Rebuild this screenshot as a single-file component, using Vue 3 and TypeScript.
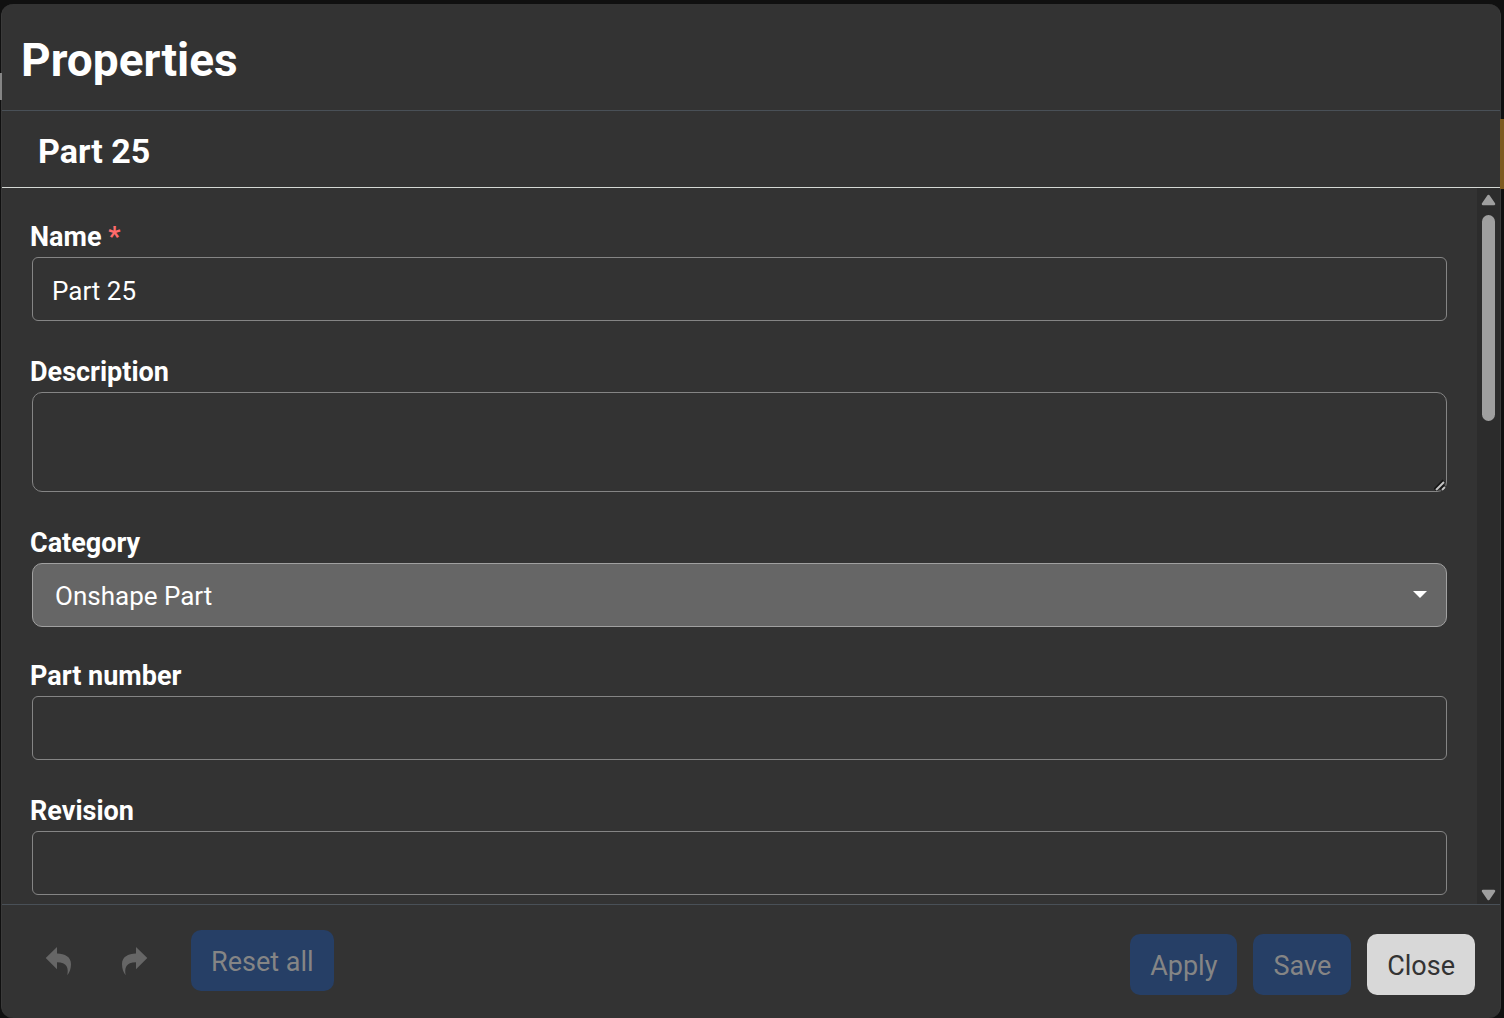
<script setup lang="ts">
import { ref } from 'vue'

const name = ref('Part 25')
const description = ref('')
const category = ref('Onshape Part')
const partNumber = ref('')
const revision = ref('')
</script>

<template>
  <div class="backdrop">
    <section class="dialog" role="dialog" aria-labelledby="dialog-title">
      <header class="dialog-header">
        <h1 id="dialog-title">Properties</h1>
      </header>
      <h2 class="part-title">Part 25</h2>

      <div class="body">
        <form id="properties" class="fields" @submit.prevent>
          <div class="field">
            <label for="name">Name <span class="required">*</span></label>
            <input id="name" v-model="name" type="text" required />
          </div>
          <div class="field">
            <label for="description">Description</label>
            <div class="control">
              <textarea id="description" v-model="description"></textarea>
              <svg class="grip" viewBox="0 0 12 12" aria-hidden="true">
                <path d="M1 11 L10 2 M7 11 L11 7" stroke="#151515" stroke-width="4" />
                <path d="M2 11 L10 3 M8 11 L11 8" stroke="#c4c4c4" stroke-width="2" />
              </svg>
            </div>
          </div>
          <div class="field field-select">
            <label for="category">Category</label>
            <div class="control">
              <select id="category" v-model="category">
                <option>Onshape Part</option>
              </select>
              <svg class="caret" viewBox="0 0 14 7" aria-hidden="true">
                <path d="M0 0 H14 L7 7 Z" fill="#fff" />
              </svg>
            </div>
          </div>
          <div class="field">
            <label for="part-number">Part number</label>
            <input id="part-number" v-model="partNumber" type="text" />
          </div>
          <div class="field">
            <label for="revision">Revision</label>
            <input id="revision" v-model="revision" type="text" />
          </div>
        </form>
        <div class="scrollbar" aria-hidden="true">
          <svg class="arrow" viewBox="0 0 15 12">
            <path d="M7.500 2 L13 10 H2 Z" fill="#9f9f9f" stroke="#9f9f9f" stroke-width="2.500" stroke-linejoin="round" />
          </svg>
          <div class="track"><div class="thumb"></div></div>
          <svg class="arrow" viewBox="0 0 15 12">
            <path d="M7.500 10 L13 2 H2 Z" fill="#9f9f9f" stroke="#9f9f9f" stroke-width="2.500" stroke-linejoin="round" />
          </svg>
        </div>
      </div>

      <footer class="dialog-footer">
        <div class="history">
          <button class="icon-button" type="button" aria-label="Undo" disabled>
            <svg viewBox="0 0 27 30">
              <path d="M.7 12 L12 1 V7.500 C20 7.500 26 11 26 18 C26 23 24.500 26.500 22.300 29.300 C23.800 22 22 16.300 12 16.300 V23.200 Z" fill="#666" />
            </svg>
          </button>
          <button class="icon-button" type="button" aria-label="Redo" disabled>
            <svg viewBox="0 0 27 30">
              <path d="M26.300 12 L15 1 V7.500 C7 7.500 1 11 1 18 C1 23 2.500 26.500 4.700 29.300 C3.200 22 5 16.300 15 16.300 V23.200 Z" fill="#666" />
            </svg>
          </button>
          <button class="button" type="button" disabled>Reset all</button>
        </div>
        <div class="actions">
          <button class="button" type="button" disabled>Apply</button>
          <button class="button" type="submit" form="properties" disabled>Save</button>
          <button class="button button-light" type="button">Close</button>
        </div>
      </footer>
    </section>
    <span class="peek peek-left" aria-hidden="true"></span>
    <span class="peek peek-right" aria-hidden="true"></span>
  </div>
</template>

<style>
body {
  margin: 0;
  background: #101010;
}
</style>

<style scoped>
.backdrop {
  position: relative;
  display: flex;
  box-sizing: border-box;
  height: 100vh;
  padding: 4px 3px 0 1px;
  overflow: hidden;
  background: #101010;
  color: #fff;
  font-family: Roboto, "Liberation Sans", sans-serif;
  font-size: 27px;
}

.peek {
  position: absolute;
}

.peek-left {
  top: 73px;
  left: 0;
  width: 2px;
  height: 27px;
  background: #858585;
}

.peek-right {
  top: 119px;
  right: 0;
  width: 4px;
  height: 70px;
  background: #7d5a20;
}

.dialog {
  display: flex;
  flex: 1;
  flex-direction: column;
  min-width: 0;
  border: solid #3a3a3a;
  border-width: 0 1px;
  border-radius: 12px;
  background: #333;
}

.dialog-header {
  padding: 26px 19px 20px;
  border-bottom: 1px solid #495057;
}

h1,
h2 {
  margin: 0;
  font-weight: 700;
}

h1 {
  font-size: 46px;
  line-height: 60px;
}

.part-title {
  padding: 20px 36px 16px;
  border-bottom: 1px solid #d4d8d4;
  font-size: 34px;
  line-height: 40px;
}

.body {
  display: flex;
  flex: 1;
  min-height: 0;
}

.fields {
  flex: 1;
  min-width: 0;
  padding: 29px 30px 0 28px;
  overflow: hidden;
}

.field {
  margin-bottom: 31px;
}

.field-select {
  margin-bottom: 29px;
}

label {
  display: block;
  font-weight: 700;
  line-height: 40px;
}

.required {
  color: #ff6b6b;
}

.control {
  position: relative;
  display: flex;
}

input,
textarea,
select {
  display: block;
  box-sizing: border-box;
  width: calc(100% - 2px);
  height: 64px;
  margin: 0 0 0 2px;
  padding: 4px 19px 0;
  border: 1px solid #858585;
  border-radius: 6px;
  outline: none;
  background: #333;
  color: #fff;
  font: inherit;
  font-size: 26px;
}

textarea {
  height: 100px;
  border-radius: 10px;
  resize: none;
}

select {
  padding: 2px 22px 0;
  border-color: #a0a0a0;
  border-radius: 10px;
  appearance: none;
  background: #666;
}

.grip {
  position: absolute;
  right: 1px;
  bottom: 1px;
  width: 12px;
  height: 12px;
}

.caret {
  position: absolute;
  top: 28px;
  right: 20px;
  width: 14px;
  height: 7px;
  pointer-events: none;
}

.scrollbar {
  display: flex;
  flex-direction: column;
  align-items: center;
  box-sizing: border-box;
  width: 23px;
  padding: 6px 0 3px;
  background: #2c2c2c;
}

.arrow {
  width: 15px;
  height: 12px;
}

.track {
  flex: 1;
  width: 13px;
  padding: 9px 0;
}

.thumb {
  height: 31%;
  border-radius: 7px;
  background: #9f9f9f;
}

.dialog-footer {
  display: flex;
  align-items: flex-start;
  justify-content: space-between;
  padding: 25px 25px 23px 43px;
  border-top: 1px solid #495057;
}

.history,
.actions {
  display: flex;
}

.history {
  align-items: center;
}

.actions {
  gap: 16px;
  padding-top: 4px;
}

.icon-button {
  display: flex;
  width: 27px;
  margin-right: 49px;
  padding: 0;
  border: 0;
  background: none;
}

.icon-button + .button {
  margin-left: -6px;
}

.icon-button svg {
  width: 27px;
  height: 30px;
}

.button {
  height: 61px;
  padding: 2px 20px 0;
  border: 0;
  border-radius: 10px;
  background: #263f66;
  color: #858585;
  font: inherit;
}

.button-light {
  background: #d8d8d8;
  color: #333;
}
</style>
